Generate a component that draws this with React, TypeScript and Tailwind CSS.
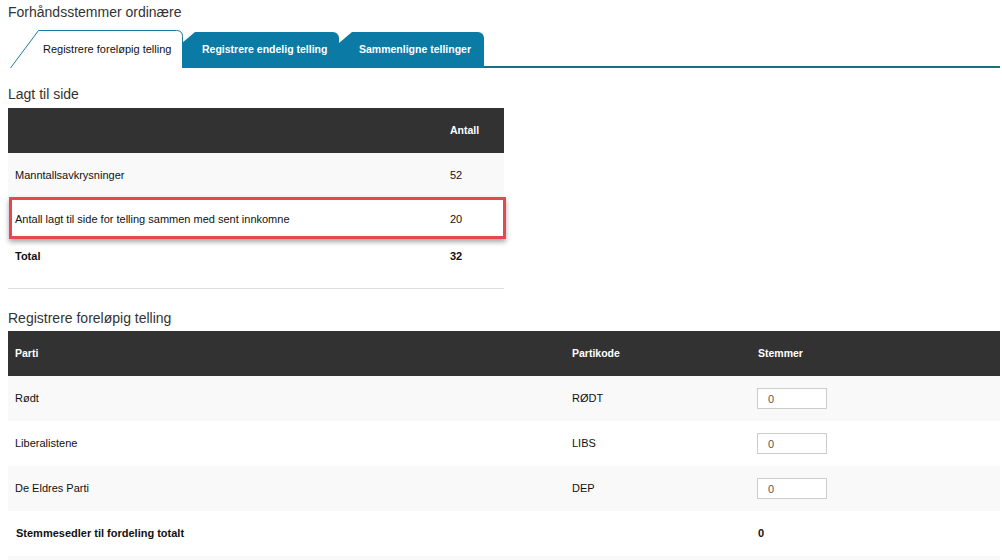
import React from "react";

const font = { fontFamily: '"Liberation Sans", Arial, sans-serif' };

function ActiveTab() {
  return (
    <div className="relative w-[173px] h-[38px] flex items-center pl-[33px] text-[11px] text-[#111]">
      <svg className="absolute inset-0" width="173" height="38" viewBox="0 0 173 38" fill="none">
        <path d="M0.5 38 L28.5 0.5 L166.5 0.5 Q172.5 0.5 172.5 6.5 L172.5 38" stroke="#1b7aa0" strokeWidth="1" fill="#ffffff" />
      </svg>
      <span className="relative">Registrere foreløpig telling</span>
    </div>
  );
}

function Tab({ label, w }: { label: string; w: string }) {
  return (
    <div
      className={`${w} h-[36px] bg-[#0b7aa5] rounded-tr-[6px] flex items-center pl-[20px] text-[10.5px] font-bold text-white`}
      style={{ clipPath: "polygon(0 100%, 0 11px, 13px 0, 100% 0, 100% 100%)" }}
    >
      {label}
    </div>
  );
}

const rows = [
  { name: "Rødt", code: "RØDT" },
  { name: "Liberalistene", code: "LIBS" },
  { name: "De Eldres Parti", code: "DEP" },
];

export default function App() {
  return (
    <div className="w-[1002px] h-[560px] overflow-hidden bg-white pl-2 pr-[2px] text-[#111]" style={font}>
      <div className="pt-[3px] h-[21px] text-[14px] leading-[18px] text-[#333]">Forhåndsstemmer ordinære</div>

      <div className="mt-[9px] flex items-end h-[38px] pl-[2px]">
        <ActiveTab />
        <Tab label="Registrere endelig telling" w="w-[157px] -ml-[1px]" />
        <Tab label="Sammenligne tellinger" w="w-[145px]" />
        <div className="flex-1 h-[2px] bg-[#1e6e83]" />
      </div>

      <div className="mt-[17px] h-[18px] text-[14px] leading-[18px] text-[#333]">Lagt til side</div>

      <div className="mt-[5px] w-[496px] text-[11px] leading-[13px]">
        <div className="grid grid-cols-[435px_1fr] h-[45px] bg-[#323232] text-white font-bold text-[10.5px] items-center">
          <div className="px-[7px]"></div>
          <div className="px-[7px]">Antall</div>
        </div>
        <div className="grid grid-cols-[435px_1fr] h-[45px] bg-[#f9f9f9] items-center">
          <div className="px-[7px]">Manntallsavkrysninger</div>
          <div className="px-[7px]">52</div>
        </div>
        <div className="relative grid grid-cols-[435px_1fr] h-[45px] bg-white items-center">
          <div className="px-[7px] pb-[2px]">Antall lagt til side for telling sammen med sent innkomne</div>
          <div className="px-[7px] pb-[2px]">20</div>
          <div className="absolute left-[1px] -right-[2px] -top-[1px] h-[42px] border-[3px] border-[#e4474e] shadow-[0_3px_5px_rgba(0,0,0,0.35)]" />
        </div>
        <div className="grid grid-cols-[435px_1fr] h-[46px] border-b border-[#dddddd] items-start pt-[7px] font-bold">
          <div className="px-[7px]">Total</div>
          <div className="px-[7px]">32</div>
        </div>
      </div>

      <div className="mt-[20px] h-[18px] text-[14px] leading-[18px] text-[#333]">Registrere foreløpig telling</div>

      <div className="mt-[4px] text-[11px] leading-[13px]">
        <div className="grid grid-cols-[557px_186px_1fr] h-[45px] bg-[#323232] text-white font-bold text-[10.5px] items-center">
          <div className="px-[7px]">Parti</div>
          <div className="px-[7px]">Partikode</div>
          <div className="px-[7px]">Stemmer</div>
        </div>
        {rows.map((r, i) => (
          <div
            key={r.code}
            className={`grid grid-cols-[557px_186px_1fr] h-[45px] items-center ${i % 2 === 0 ? "bg-[#f9f9f9]" : "bg-white"}`}
          >
            <div className="px-[7px]">{r.name}</div>
            <div className="px-[7px]">{r.code}</div>
            <div className="px-[6px]">
              <input
                readOnly
                value="0"
                className="w-[70px] h-[21px] border border-[#cccccc] bg-white pl-[10px] text-[11px] text-[#555] outline-none"
                style={font}
              />
            </div>
          </div>
        ))}
        <div className="grid grid-cols-[557px_186px_1fr] h-[45px] items-center bg-white font-bold">
          <div className="px-[8px]">Stemmesedler til fordeling totalt</div>
          <div className="px-[7px]"></div>
          <div className="px-[7px]">0</div>
        </div>
        <div className="h-[45px] bg-[#f9f9f9]" />
      </div>
    </div>
  );
}
